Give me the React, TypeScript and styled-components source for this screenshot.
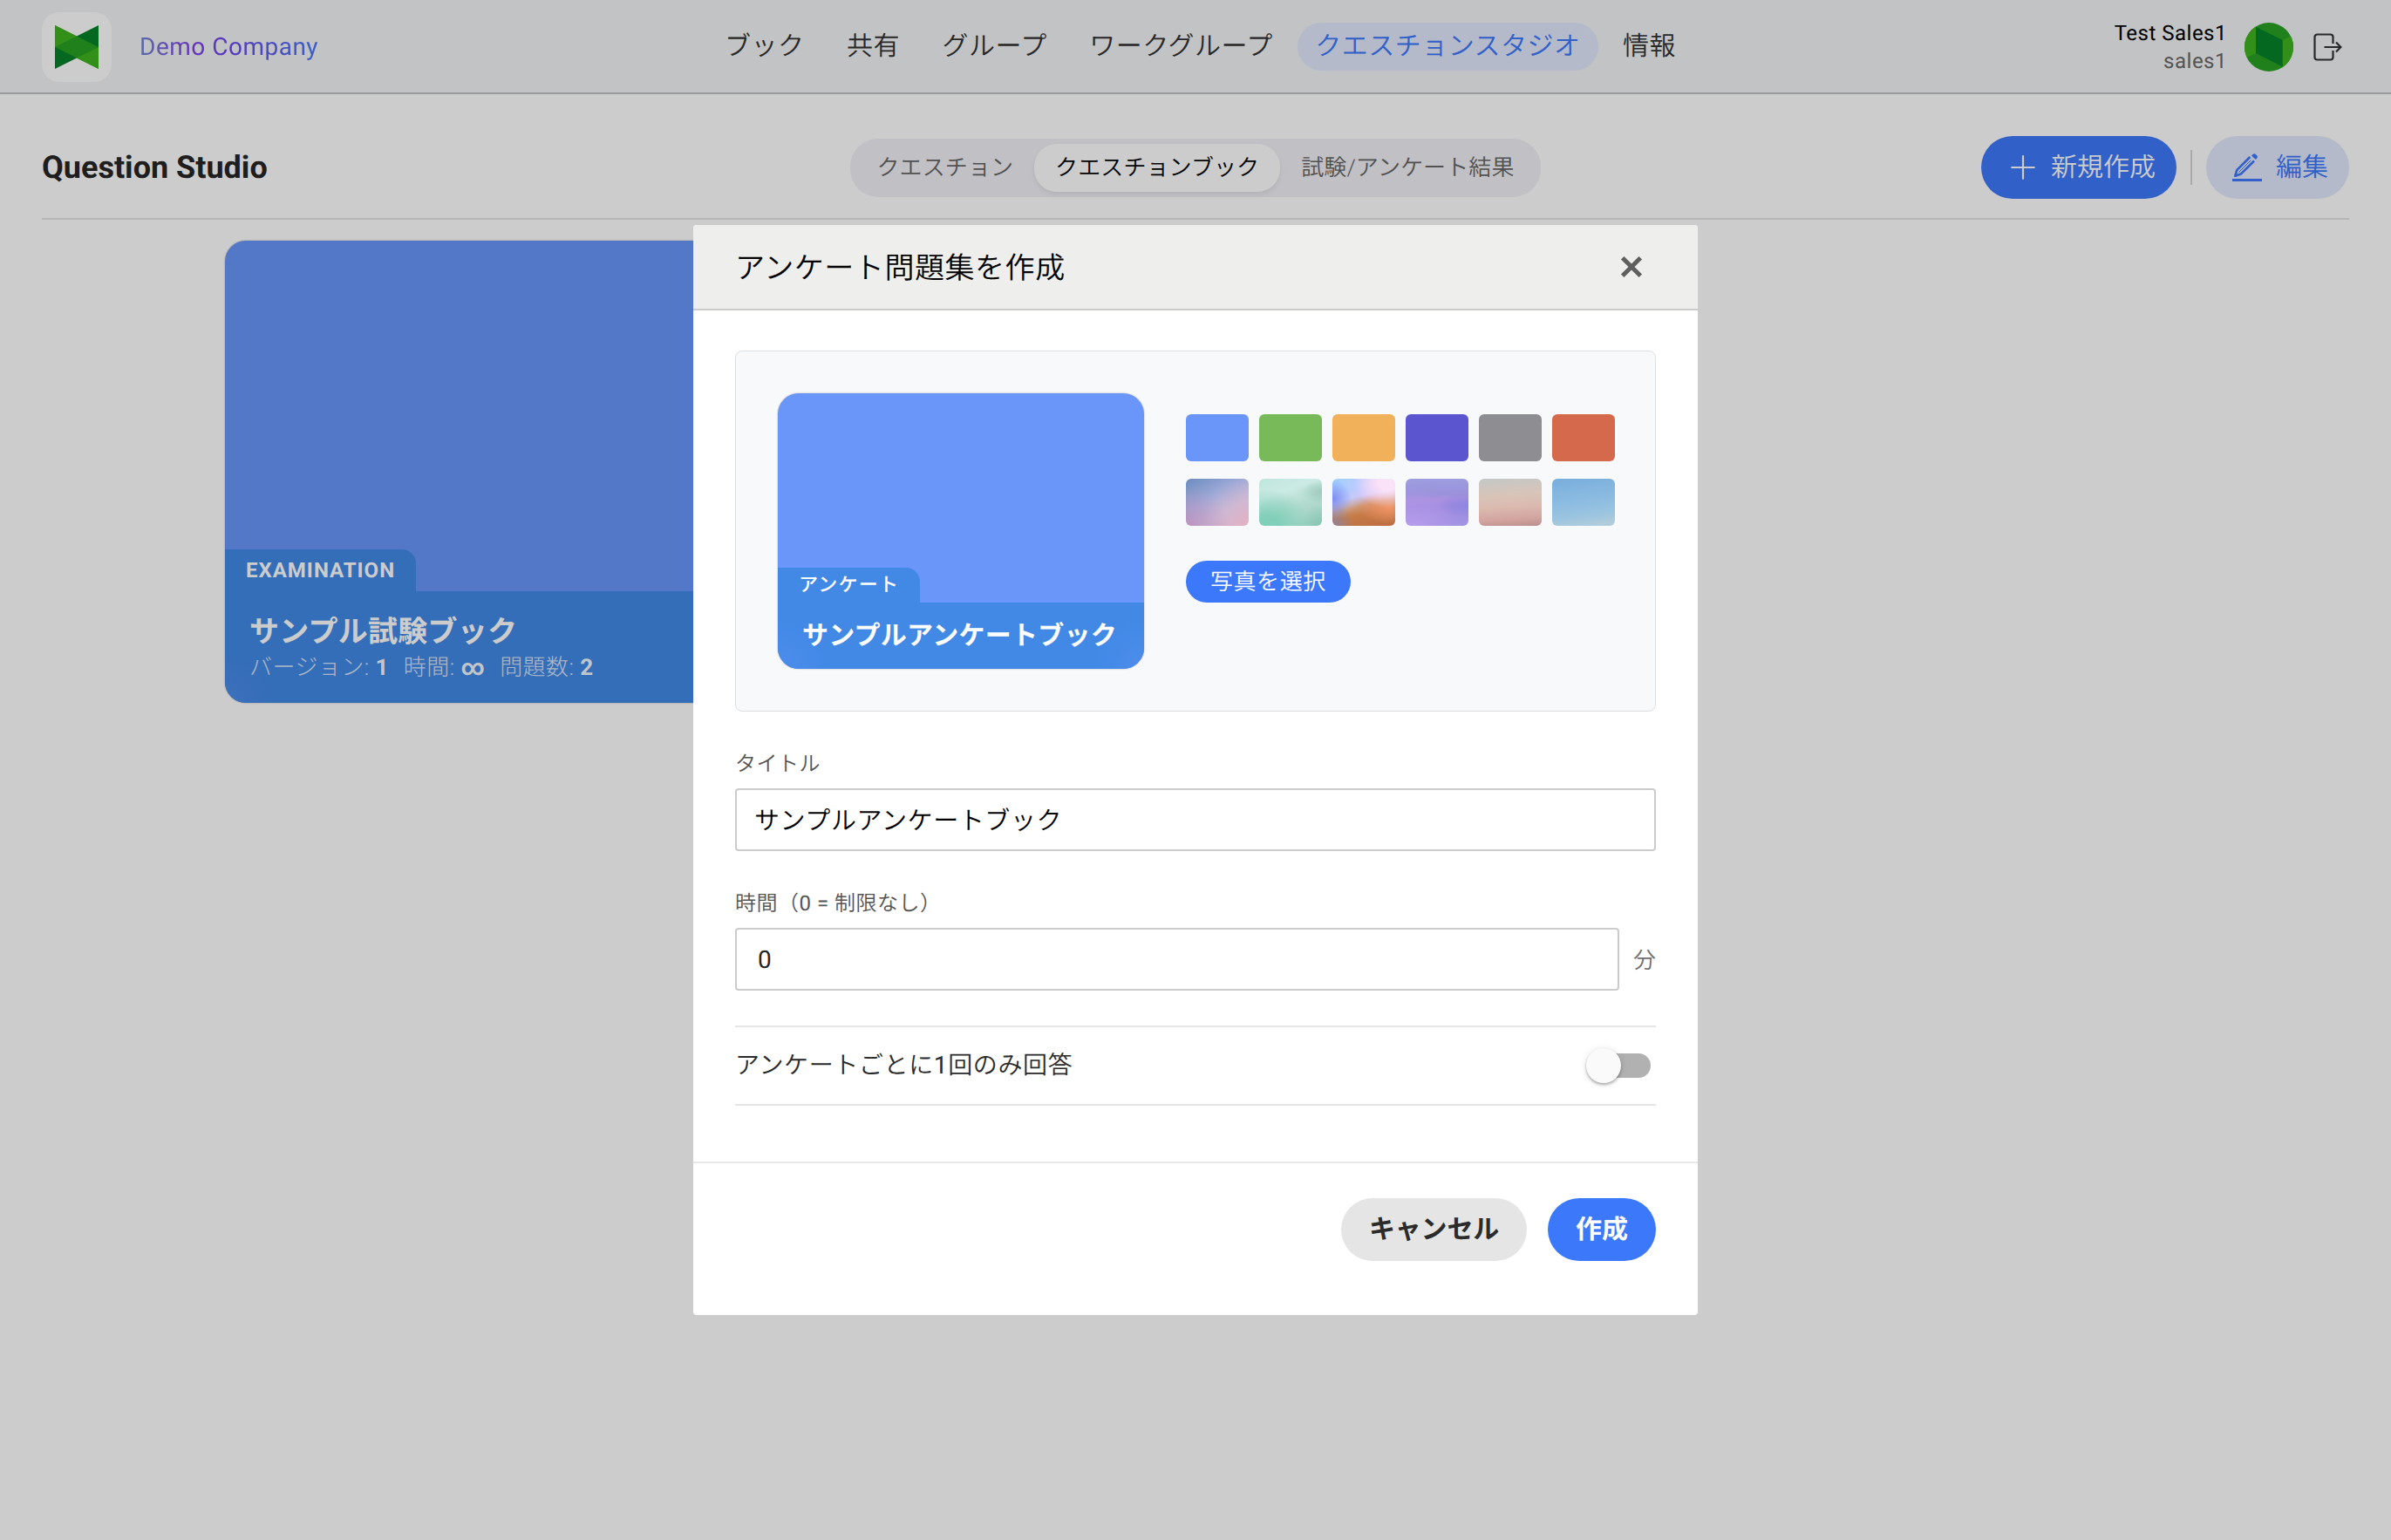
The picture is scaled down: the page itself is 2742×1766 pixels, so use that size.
import React from "react";
import styled, { createGlobalStyle } from "styled-components";

const GlobalStyle = createGlobalStyle`
  *, *::before, *::after { box-sizing: border-box; }
  body {
    margin: 0;
    background: #fff;
    color: #333;
    font-family: Roboto, "Noto Sans CJK JP", sans-serif;
    font-size: 28px;
    text-rendering: geometricPrecision;
  }
  button, input { font-family: inherit; text-rendering: inherit; }
`;

const BLUE = "#3c78fa";
const PALE_BLUE = "#e1e9fd";

const Screen = styled.div`
  position: relative;
  width: 2742px;
  height: 1766px;
  overflow: hidden;
  background: #fff;
`;

/* Latin digits and signs keep the regular weight inside lighter Japanese text. */
const Latin = styled.span`
  font-weight: 400;
`;

/* ---------- header ---------- */

const Header = styled.header`
  display: flex;
  align-items: center;
  justify-content: space-between;
  height: 108px;
  padding: 0 56px 0 48px;
  background: #f3f4f6;
  border-bottom: 2px solid #c1c2c3;
`;

const Brand = styled.div`
  display: flex;
  align-items: center;
  gap: 32px;
  width: 763px;
`;

const LogoTile = styled.div`
  display: flex;
  align-items: center;
  justify-content: center;
  width: 80px;
  height: 80px;
  margin-top: 2px;
  border-radius: 20px;
  background: #fff;
`;

const BrandName = styled.span`
  margin-top: 2px;
  font-size: 28px;
  line-height: 40px;
  letter-spacing: 0.5px;
  color: transparent;
  background: linear-gradient(90deg, #7384d0 0%, #8040ee 30%, #6c48ea 50%, #4a78f8 100%);
  background-clip: text;
`;

const Nav = styled.nav`
  display: flex;
  flex: 1;
  gap: 8.5px;
`;

const NavItem = styled.a<{ $active?: boolean }>`
  height: 55px;
  padding: 0 20px;
  border-radius: 28px;
  font-size: 30px;
  line-height: 56px;
  font-weight: 350;
  letter-spacing: 0.5px;
  color: ${(p) => (p.$active ? BLUE : "#333")};
  background: ${(p) => (p.$active ? PALE_BLUE : "transparent")};
`;

const UserArea = styled.div`
  display: flex;
  align-items: center;
`;

const UserNames = styled.div`
  margin: 2px 20px 0 0;
  font-size: 24px;
  line-height: 32px;
  letter-spacing: 0.5px;
  text-align: right;
  color: #000;
`;

const UserId = styled.div`
  color: #6a6a6b;
`;

const AvatarIcon = styled.svg`
  display: block;
  margin: 2px 22px 0 0;
  border-radius: 50%;
`;

const LogoutIcon = styled.svg`
  display: block;
  margin-top: 2px;
`;

/* ---------- studio toolbar ---------- */

const Toolbar = styled.div`
  display: grid;
  grid-template-columns: 1fr auto 1fr;
  align-items: center;
  height: 144px;
  margin: 0 48px;
  padding-top: 26px;
  border-bottom: 2px solid #e4e4e5;
`;

const PageTitle = styled.h1`
  margin: 0;
  font-size: 36px;
  line-height: 48px;
  font-weight: 700;
  color: #262626;
`;

const Tabs = styled.div`
  display: flex;
  height: 67px;
  margin-top: 1px;
  padding: 6px;
  border-radius: 32px;
  background: #f2f2f7;
`;

const Tab = styled.div<{ $active?: boolean }>`
  padding: 0 24px;
  border-radius: 26px;
  font-size: 26px;
  line-height: 57px;
  font-weight: 350;
  letter-spacing: 0.1px;
  color: ${(p) => (p.$active ? "#000" : "#666")};
  background: ${(p) => (p.$active ? "#fff" : "transparent")};
  box-shadow: ${(p) => (p.$active ? "0 3px 6px rgba(0, 0, 0, 0.08)" : "none")};
`;

const Actions = styled.div`
  display: flex;
  align-items: center;
  justify-content: flex-end;
`;

const ActionButton = styled.button<{ $pale?: boolean }>`
  display: flex;
  align-items: center;
  gap: ${(p) => (p.$pale ? "16px" : "18px")};
  height: 72px;
  padding: ${(p) => (p.$pale ? "0 24px 0 30px" : "0 24px 0 34px")};
  border: 0;
  border-radius: 36px;
  font-size: 30px;
  font-weight: 350;
  color: ${(p) => (p.$pale ? BLUE : "#fff")};
  background: ${(p) => (p.$pale ? PALE_BLUE : BLUE)};
`;

const ActionLabel = styled.span`
  margin-top: 2px;
  line-height: 48px;
`;

const ActionDivider = styled.span`
  width: 2px;
  height: 40px;
  margin: 0 16px;
  background: #d4d5d7;
`;

/* ---------- book covers ---------- */

const CardGrid = styled.main`
  display: flex;
  padding: 24px 258px;
`;

const Cover = styled.article<{ $small?: boolean }>`
  display: flex;
  flex-direction: column;
  justify-content: flex-end;
  flex: none;
  width: ${(p) => (p.$small ? 420 : 706)}px;
  height: ${(p) => (p.$small ? 316 : 530)}px;
  border-radius: 24px;
  overflow: hidden;
  color: #fff;
  background: #6a96fa;
  box-shadow: 0 0 2px rgba(0, 0, 0, 0.35);
`;

const CoverTag = styled.div<{ $small?: boolean }>`
  align-self: flex-start;
  height: ${(p) => (p.$small ? 40 : 48)}px;
  padding: 0 24px;
  border-radius: 0 16px 0 0;
  font-size: ${(p) => (p.$small ? 22 : 24)}px;
  line-height: ${(p) => (p.$small ? 41 : 48)}px;
  font-weight: ${(p) => (p.$small ? 500 : 700)};
  letter-spacing: ${(p) => (p.$small ? 1.2 : 1)}px;
  background: #4289e6;
`;

const CoverInfo = styled.div<{ $small?: boolean }>`
  height: ${(p) => (p.$small ? 76 : 128)}px;
  padding: ${(p) => (p.$small ? 15 : 23)}px 28px 0;
  background:
    radial-gradient(circle at 0 100%, rgba(106, 150, 250, 0.28), transparent 56px),
    radial-gradient(circle at 100% 100%, rgba(106, 150, 250, 0.28), transparent 56px),
    #4289e6;
`;

const CoverTitle = styled.div<{ $small?: boolean }>`
  font-size: ${(p) => (p.$small ? 30 : 34)}px;
  line-height: 48px;
  font-weight: 700;
  letter-spacing: 0.25px;
  white-space: nowrap;
`;

const CoverMeta = styled.div`
  display: flex;
  gap: 17px;
  font-size: 26px;
  line-height: 34px;
  font-weight: 300;
  letter-spacing: 0.45px;
  color: rgba(255, 255, 255, 0.8);

  b {
    font-weight: 700;
    color: rgba(255, 255, 255, 0.95);
  }
`;

/* ---------- dialog ---------- */

const Backdrop = styled.div`
  position: absolute;
  inset: 0;
  display: flex;
  align-items: center;
  justify-content: center;
  background: rgba(0, 0, 0, 0.2);
`;

const Dialog = styled.section`
  display: flex;
  flex-direction: column;
  width: 1152px;
  height: 1250px;
  border-radius: 4px;
  overflow: hidden;
  background: #fff;
`;

const DialogHeader = styled.header`
  display: flex;
  align-items: center;
  justify-content: space-between;
  height: 98px;
  padding: 0 63px 0 48px;
  background: #eeeeec;
  border-bottom: 2px solid #ccc;
`;

const DialogTitle = styled.h2`
  margin: 4px 0 0;
  font-size: 34px;
  line-height: 48px;
  font-weight: 350;
  letter-spacing: 0.55px;
  color: #000;
`;

const DialogBody = styled.div`
  flex: 1;
  padding: 46px 48px 0;
`;

const CoverPicker = styled.div`
  display: flex;
  gap: 48px;
  height: 414px;
  padding: 48px;
  border: 1px solid #dcdfe2;
  border-radius: 8px;
  background: #f8f9fb;
`;

const PickerOptions = styled.div`
  padding-top: 24px;
`;

const Swatches = styled.div`
  display: grid;
  grid-template-columns: repeat(6, 72px);
  gap: 20px 12px;
`;

const Swatch = styled.div<{ $fill: string }>`
  height: 54px;
  border-radius: 6px;
  background: ${(p) => p.$fill};
`;

const PhotoButton = styled.button`
  height: 48px;
  margin-top: 40px;
  padding: 2px 28px 0;
  border: 0;
  border-radius: 24px;
  font-size: 26px;
  line-height: 46px;
  font-weight: 350;
  letter-spacing: 0.55px;
  color: #fff;
  background: ${BLUE};
`;

const FieldLabel = styled.label`
  display: block;
  height: 48px;
  margin-top: 40px;
  font-size: 24px;
  line-height: 40px;
  font-weight: 350;
  letter-spacing: 0.5px;
  color: #555;
`;

const FieldRow = styled.div`
  display: flex;
  align-items: center;
  justify-content: space-between;
`;

const TextInput = styled.input<{ $width: number; $numeric?: boolean }>`
  display: block;
  width: ${(p) => p.$width}px;
  height: 72px;
  padding: 0 ${(p) => (p.$numeric ? "24px" : "20px 2px")};
  border: 2px solid #ccc;
  border-radius: 4px;
  outline: 0;
  font-size: ${(p) => (p.$numeric ? 28 : 29)}px;
  font-weight: ${(p) => (p.$numeric ? 400 : 350)};
  letter-spacing: 0.6px;
  color: ${(p) => (p.$numeric ? "#262626" : "#000")};
  background: #fff;
`;

const Unit = styled.span`
  margin-top: 3px;
  font-size: 26px;
  line-height: 40px;
  font-weight: 350;
  color: #707070;
`;

const OptionRow = styled.div`
  display: flex;
  align-items: center;
  justify-content: space-between;
  height: 92px;
  margin-top: 40px;
  padding-right: 6px;
  border-top: 2px solid #e5e5e5;
  border-bottom: 2px solid #e5e5e5;
  font-size: 28px;
  font-weight: 350;
  letter-spacing: 0.62px;
  line-height: 40px;
  color: #2b2b2b;
`;

const SwitchTrack = styled.span`
  display: flex;
  align-items: center;
  width: 68px;
  height: 28px;
  border-radius: 14px;
  background: #b1b1b1;
`;

const SwitchThumb = styled.span`
  flex: none;
  width: 40px;
  height: 40px;
  margin-left: -6px;
  border-radius: 50%;
  background: #fafafa;
  box-shadow: 0 2px 3px rgba(0, 0, 0, 0.28), 0 1px 8px rgba(0, 0, 0, 0.12);
`;

const DialogFooter = styled.footer`
  display: flex;
  justify-content: flex-end;
  gap: 24px;
  height: 176px;
  padding: 40px 48px 0;
  border-top: 2px solid #e8e8e8;
`;

const FooterButton = styled.button<{ $primary?: boolean }>`
  height: 72px;
  padding: 2px 32px 0;
  border: 0;
  border-radius: 36px;
  font-size: 30px;
  line-height: 70px;
  font-weight: 700;
  letter-spacing: ${(p) => (p.$primary ? "0" : "-0.2px")};
  color: ${(p) => (p.$primary ? "#fff" : "#2b2b2b")};
  background: ${(p) => (p.$primary ? BLUE : "#e5e5e5")};
`;

/* ---------- data ---------- */

const navItems = ["ブック", "共有", "グループ", "ワークグループ", "クエスチョンスタジオ", "情報"];
const tabs = ["クエスチョン", "クエスチョンブック", "試験/アンケート結果"];

const swatches = [
  "#6a96fa",
  "#78ba5a",
  "#f0b15a",
  "#5b56d0",
  "#8e8d92",
  "#d5694b",
  "radial-gradient(circle at 0 110%, rgba(190,140,184,.9), transparent 55%), radial-gradient(circle at 100% 110%, rgba(228,176,194,.9), transparent 65%), linear-gradient(150deg, #7190c2 5%, #a2acd9 42%, #c3bedd 68%, #d2b4cc)",
  "radial-gradient(ellipse at 100% 28%, rgba(156,202,188,.95), transparent 24%), radial-gradient(ellipse at 15% 100%, #80cfb8 12%, transparent 55%), radial-gradient(circle at 100% 105%, #84c5b1, transparent 30%), linear-gradient(160deg, #bfe6dc, #cbeae3 30%, #b2dace 60%, #9acfbf)",
  "radial-gradient(ellipse at 88% 8%, #fae2f8 12%, transparent 42%), radial-gradient(ellipse at 90% 62%, #f09468, transparent 38%), radial-gradient(circle at 0 42%, rgba(118,134,240,.9), transparent 28%), radial-gradient(circle at 0 0, #9ccfff, transparent 50%), radial-gradient(circle at 0 100%, #8f8298, transparent 28%), linear-gradient(168deg, #c4ccff 0%, #d6c6f6 38%, #d0946e 56%, #c67a46 70%, #bb6c42 100%)",
  "radial-gradient(ellipse at 100% 56%, rgba(136,132,226,.8), transparent 34%), radial-gradient(ellipse at 10% 110%, #b89cec, transparent 60%), linear-gradient(178deg, #9f9ddf 0%, #9a92dc 34%, #aa90de 44%, #a08bde 58%, #a294e4 100%)",
  "linear-gradient(176deg, #c4c8c6 0%, #d8c4b8 36%, #dbb9af 60%, #d2a39f 84%, #b98f8e 100%)",
  "linear-gradient(172deg, #78aedc 0%, #8abae0 42%, #98c3e0 70%, #b6cedb 100%)",
];

/* ---------- icons ---------- */

const Logo = () => (
  <svg width="50" height="50" viewBox="0 0 50 50">
    <path d="M0 0L50 25V50L0 25Z" fill="#3fb520" />
    <path d="M50 0L0 25V50L50 25Z" fill="#058228" />
    <path d="M25 12.5L50 25L25 37.5L0 25Z" fill="#27a023" />
    <path d="M0 0L25 12.5L0 25Z" fill="#3fb520" />
    <path d="M50 50L25 37.5L50 25Z" fill="#3fb520" />
  </svg>
);

const Avatar = () => (
  <AvatarIcon width="56" height="56" viewBox="0 0 56 56">
    <rect width="56" height="56" fill="#27a023" />
    <path d="M0 0H13V35L0 41Z" fill="#3fb520" />
    <path d="M43.5 20L56 14.5V56H43.5Z" fill="#3fb520" />
    <path d="M13 4.7L43.7 20V50.5L13 35Z" fill="#058228" />
  </AvatarIcon>
);

const Logout = () => (
  <LogoutIcon width="34" height="32" viewBox="0 0 34 32" fill="none" stroke="#333" strokeWidth="2.2">
    <path d="M23.5 12V4.5a3 3 0 0 0-3-3h-15a3 3 0 0 0-3 3v23a3 3 0 0 0 3 3h15a3 3 0 0 0 3-3V20" />
    <path d="M13.5 16H32M27 10.5L32.4 16L27 21.5" />
  </LogoutIcon>
);

const Plus = () => (
  <svg width="28" height="28" viewBox="0 0 28 28" stroke="currentColor" strokeWidth="2.2" strokeLinecap="round">
    <path d="M14 1.2V26.8M1.2 14H26.8" />
  </svg>
);

const Pencil = () => (
  <svg width="34" height="34" viewBox="0 0 34 34" fill="none" stroke="currentColor">
    <path d="M0 31.5H34" strokeWidth="3" />
    <path d="M20.3 5L5.2 20.2L3.4 26.8L9.8 24.6L25 9.5" strokeWidth="2.6" strokeLinejoin="round" />
    <path d="M21.2 8.8L7.4 22.6" strokeWidth="1" />
    <path d="M3 23L7 26.6L2.4 28Z" fill="currentColor" stroke="none" />
    <path d="M22 3.4L24.2 1.5Q25.4 .9 26.6 1.7L28.4 3.5Q29.4 4.8 28.6 6L26.8 8.1Z" fill="currentColor" stroke="none" />
  </svg>
);

const Close = () => (
  <svg width="26" height="26" viewBox="0 0 26 26" stroke="#5f5f5f" strokeWidth="5">
    <path d="M2.7 2.7L23.3 23.3M23.3 2.7L2.7 23.3" />
  </svg>
);

/* ---------- page ---------- */

export default function App() {
  return (
    <Screen>
      <GlobalStyle />
      <Header>
        <Brand>
          <LogoTile><Logo /></LogoTile>
          <BrandName>Demo Company</BrandName>
        </Brand>
        <Nav>
          {navItems.map((name) => (
            <NavItem key={name} $active={name === "クエスチョンスタジオ"}>{name}</NavItem>
          ))}
        </Nav>
        <UserArea>
          <UserNames>
            <div>Test Sales1</div>
            <UserId>sales1</UserId>
          </UserNames>
          <Avatar />
          <Logout />
        </UserArea>
      </Header>

      <Toolbar>
        <PageTitle>Question Studio</PageTitle>
        <Tabs>
          {tabs.map((name, i) => (
            <Tab key={name} $active={i === 1}>{name}</Tab>
          ))}
        </Tabs>
        <Actions>
          <ActionButton><Plus /><ActionLabel>新規作成</ActionLabel></ActionButton>
          <ActionDivider />
          <ActionButton $pale><Pencil /><ActionLabel>編集</ActionLabel></ActionButton>
        </Actions>
      </Toolbar>

      <CardGrid>
        <Cover>
          <CoverTag>EXAMINATION</CoverTag>
          <CoverInfo>
            <CoverTitle>サンプル試験ブック</CoverTitle>
            <CoverMeta>
              <span>バージョン: <b>1</b></span>
              <span>時間: <b>∞</b></span>
              <span>問題数: <b>2</b></span>
            </CoverMeta>
          </CoverInfo>
        </Cover>
      </CardGrid>

      <Backdrop>
        <Dialog>
          <DialogHeader>
            <DialogTitle>アンケート問題集を作成</DialogTitle>
            <Close />
          </DialogHeader>
          <DialogBody>
            <CoverPicker>
              <Cover $small>
                <CoverTag $small>アンケート</CoverTag>
                <CoverInfo $small>
                  <CoverTitle $small>サンプルアンケートブック</CoverTitle>
                </CoverInfo>
              </Cover>
              <PickerOptions>
                <Swatches>
                  {swatches.map((fill) => <Swatch key={fill} $fill={fill} />)}
                </Swatches>
                <PhotoButton>写真を選択</PhotoButton>
              </PickerOptions>
            </CoverPicker>

            <FieldLabel>タイトル</FieldLabel>
            <TextInput $width={1056} defaultValue="サンプルアンケートブック" />

            <FieldLabel>時間（<Latin>0 = </Latin>制限なし）</FieldLabel>
            <FieldRow>
              <TextInput $width={1014} $numeric defaultValue="0" />
              <Unit>分</Unit>
            </FieldRow>

            <OptionRow>
              <span>アンケートごとに<Latin>1</Latin>回のみ回答</span>
              <SwitchTrack><SwitchThumb /></SwitchTrack>
            </OptionRow>
          </DialogBody>
          <DialogFooter>
            <FooterButton>キャンセル</FooterButton>
            <FooterButton $primary>作成</FooterButton>
          </DialogFooter>
        </Dialog>
      </Backdrop>
    </Screen>
  );
}
